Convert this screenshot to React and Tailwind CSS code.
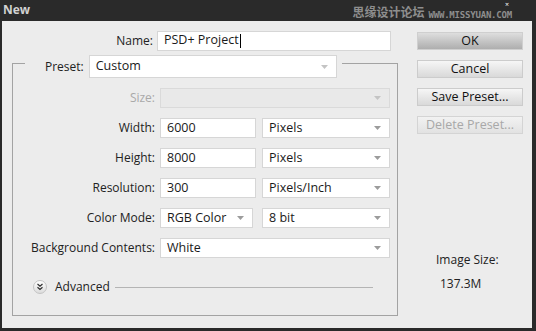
import React from 'react';

const Caret = ({ light }) => (
  <svg width="7" height="4" viewBox="0 0 7 4" className="shrink-0">
    <path d="M0 0 H7 L3.5 4 Z" fill={light ? '#c4c4c4' : '#9c9c9c'} />
  </svg>
);

const Field = ({ value, w, select, disabled, cursor }) => (
  <div
    className={`h-[20px] flex items-center border pl-[6px] pr-[8px] ${w} ${
      disabled ? 'bg-[#e9e9e9] border-[#dadada]' : 'bg-white border-[#d6d6d6]'
    }`}
  >
    <span className="flex-1 text-[12.5px] text-[#1a1a1a] leading-none whitespace-nowrap">
      {value}
      {cursor && <span className="inline-block w-[1px] h-[14px] bg-black align-middle ml-[1px]" />}
    </span>
    {select && <Caret light={disabled} />}
  </div>
);

const Row = ({ label, dim, children }) => (
  <div className="flex items-center h-[20px]">
    <div className={`w-[142px] text-right text-[12px] ${dim ? 'text-[#a9a9a9]' : 'text-[#222]'}`}>{label}</div>
    <div className="ml-[5px] flex gap-[6px]">{children}</div>
  </div>
);

const Btn = ({ children, primary, disabled }) => (
  <div
    className={`h-[18px] w-[106px] flex items-center justify-center text-[12.5px] leading-none border ${
      primary
        ? 'bg-gradient-to-b from-[#dedede] to-[#aeaeae] border-[#cfcfcf] text-[#111]'
        : disabled
        ? 'bg-gradient-to-b from-[#f2f2f2] to-[#e2e2e2] border-[#d4d4d4] text-[#a8a8a8]'
        : 'bg-gradient-to-b from-[#f6f6f6] to-[#d9d9d9] border-[#cccccc] text-[#111]'
    }`}
  >
    {children}
  </div>
);

export default function App() {
  return (
    <div className="w-[536px] h-[331px] bg-[#2a2a2a] flex flex-col" style={{ fontFamily: '"Open Sans", "Noto Sans CJK SC", sans-serif' }}>
      {/* title bar */}
      <div className="h-[21px] flex items-start pl-[3px] pr-[24px] shrink-0 overflow-hidden">
        <span className="text-[12px] font-bold text-[#d2d2d2] leading-none mt-[4px]">New</span>
        <div className="ml-auto flex items-end mt-[1px] gap-[4px] text-[#8e8e8e]">
          <span className="text-[12px] leading-none font-bold mb-[1px]">思缘设计论坛</span>
          <div className="flex flex-col items-end">
            <span className="text-[7px] text-white leading-[7px] mr-[3px] mb-[3px]">×</span>
            <span className="text-[9px] leading-[9px] font-bold tracking-[-0.2px]" style={{ fontFamily: '"DejaVu Sans Mono", monospace' }}>WWW.MISSYUAN.COM</span>
          </div>
        </div>
      </div>

      {/* body */}
      <div className="flex-1 ml-[2px] mr-[4px] mb-[3px] bg-[#ececec] flex">
        {/* left column */}
        <div className="w-[400px] flex flex-col pt-[10px]">
          <div className="flex items-center h-[20px]">
            <div className="w-[151px] text-right text-[12px] text-[#222]">Name:</div>
            <div className="ml-[4px]">
              <Field value="PSD+ Project" w="w-[234px]" cursor />
            </div>
          </div>

          {/* group box */}
          <div className="mt-[12px] ml-[10px] w-[386px] h-[253px] border border-[#a3a3a3] flex flex-col">
            <div className="ml-[12px] w-[317px] -mt-[9px] bg-[#ececec] flex items-center pl-[20px]">
              <span className="text-[12px] text-[#222]">Preset:</span>
              <div className="ml-[5px] h-[23px] w-[248px] bg-white border border-[#d6d6d6] flex items-center pl-[6px] pr-[8px]">
                <span className="flex-1 text-[12.5px] text-[#1a1a1a]">Custom</span>
                <Caret light />
              </div>
            </div>

            <div className="mt-[10px] flex flex-col gap-[10px]">
              <Row label="Size:" dim>
                <Field value="" w="w-[230px]" select disabled />
              </Row>
              <Row label="Width:">
                <Field value="6000" w="w-[96px]" />
                <Field value="Pixels" w="w-[128px]" select />
              </Row>
              <Row label="Height:">
                <Field value="8000" w="w-[96px]" />
                <Field value="Pixels" w="w-[128px]" select />
              </Row>
              <Row label="Resolution:">
                <Field value="300" w="w-[96px]" />
                <Field value="Pixels/Inch" w="w-[128px]" select />
              </Row>
              <Row label="Color Mode:">
                <Field value="RGB Color" w="w-[93px] mr-[3px]" select />
                <Field value="8 bit" w="w-[128px]" select />
              </Row>
              <Row label="Background Contents:">
                <Field value="White" w="w-[230px]" select />
              </Row>
            </div>

            <div className="mt-[20px] flex items-center pl-[20px] pr-[24px]">
              <div className="w-[14px] h-[14px] rounded-full bg-gradient-to-b from-white to-[#dcdcdc] border border-[#c4c4c4] flex items-center justify-center">
                <svg width="8" height="8" viewBox="0 0 8 8">
                  <path d="M1.5 1 L4 3.2 L6.5 1 M1.5 4.3 L4 6.5 L6.5 4.3" stroke="#333" strokeWidth="1.2" fill="none" />
                </svg>
              </div>
              <span className="ml-[8px] text-[12px] text-[#222]">Advanced</span>
              <div className="flex-1 ml-[5px] h-[1px] bg-[#b4b4b4]" />
            </div>
          </div>
        </div>

        {/* right column */}
        <div className="flex-1 flex flex-col pt-[11px] pl-[15px]">
          <div className="flex flex-col gap-[10px]">
            <Btn primary>OK</Btn>
            <Btn>Cancel</Btn>
            <Btn>Save Preset...</Btn>
            <Btn disabled>Delete Preset...</Btn>
          </div>
          <div className="mt-[117px] flex flex-col items-start text-[12px] text-[#222]">
            <span className="ml-[19px]">Image Size:</span>
            <span className="ml-[23px] mt-[6px]">137.3M</span>
          </div>
        </div>
      </div>
    </div>
  );
}
